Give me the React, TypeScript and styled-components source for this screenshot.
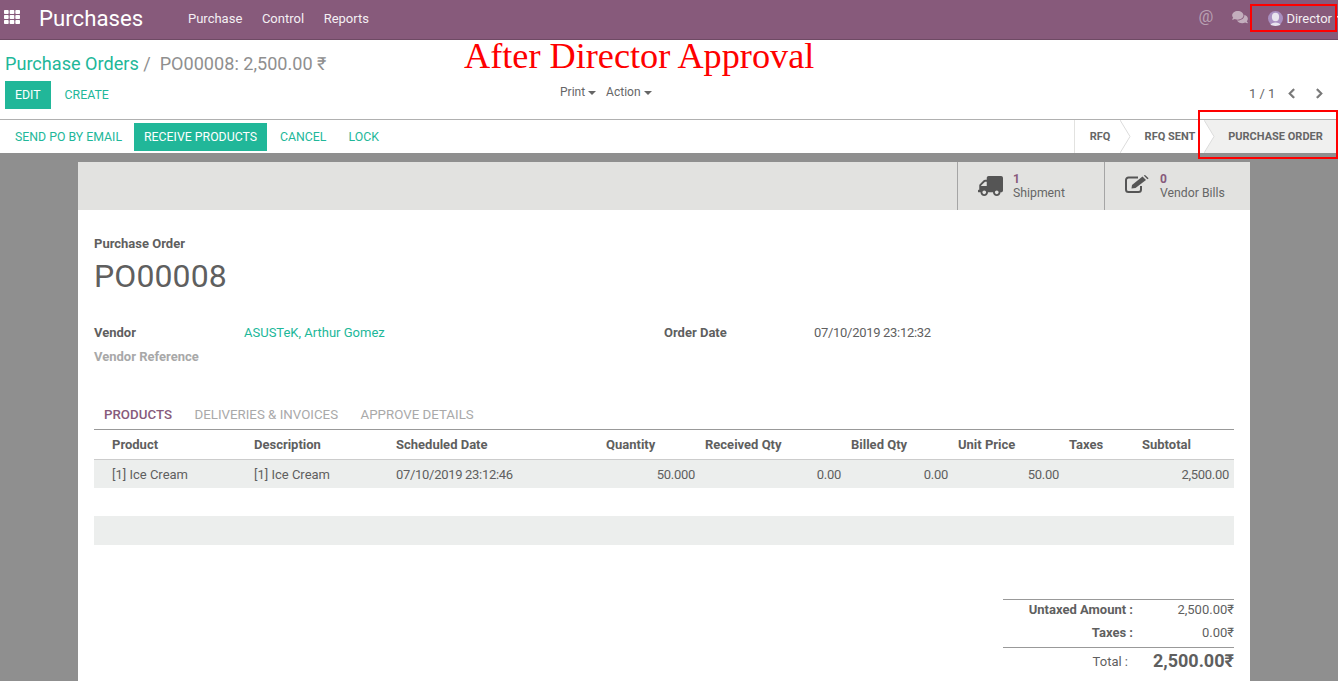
import React from "react";
import styled, { createGlobalStyle } from "styled-components";
import { FaTh, FaComments, FaTruck, FaChevronLeft, FaChevronRight } from "react-icons/fa";

const Global = createGlobalStyle`
  html, body { margin: 0; padding: 0; height: 681px; overflow: hidden; background: #fff; }
  body { font-family: Roboto, "Noto Sans", sans-serif; font-size: 13px; color: #5f5f5f; }
  * { box-sizing: border-box; }
`;

const Page = styled.div`
  position: relative;
  width: 1338px;
  height: 681px;
  overflow: hidden;
  display: flex;
  flex-direction: column;
`;

const Navbar = styled.header`
  height: 40px;
  flex: none;
  background: #875a7b;
  border-bottom: 1px solid #6e4a64;
  display: flex;
  align-items: center;
  color: #fff;
  padding: 0 0 3px 3px;
`;
const AppsIcon = styled(FaTh)`
  width: 18px;
  height: 16px;
  margin-top: -3px;
`;
const Brand = styled.div`
  font-size: 22.2px;
  margin-left: 18px;
  width: 149px;
`;
const NavLink = styled.a`
  margin-right: 19.6px;
  color: #f4eff3;
`;
const NavRight = styled.div`
  margin-left: auto;
  display: flex;
  align-items: center;
  color: #f4eff3;
`;
const AtSign = styled.span`
  font-size: 16.5px;
  color: #b9a1b3;
  margin-right: 19px;
  margin-top: -4px;
`;
const ChatIcon = styled(FaComments)`
  width: 16px;
  height: 14px;
  color: #c3aebd;
  margin-right: 20px;
  margin-top: -2px;
`;
const Avatar = styled.svg`
  width: 15px;
  height: 15px;
  margin-right: 3px;
  margin-top: 1px;
`;
const UserCaret = styled.i`
  display: inline-block;
  margin-left: 4px;
  margin-right: -6px;
  border-top: 4px solid #f4eff3;
  border-left: 4px solid transparent;
  border-right: 4px solid transparent;
`;

const ControlPanel = styled.section`
  height: 80px;
  flex: none;
  border-bottom: 1px solid #b0b0b0;
  padding: 0 5px;
  display: flex;
  flex-direction: column;
`;
const Breadcrumb = styled.div`
  font-size: 18.1px;
  line-height: 24px;
  margin-top: 12px;
  color: #8f8f8f;
  white-space: pre;
`;
const Crumb = styled.span`
  color: #21b799;
`;
const PanelRow = styled.div`
  display: grid;
  grid-template-columns: 555px 689px 1fr;
  margin-top: 5px;
  align-items: start;
`;
const Buttons = styled.div`
  display: flex;
  align-items: center;
`;
const StatusButtons = styled(Buttons)`
  gap: 2px;
`;
const Primary = styled.button`
  height: 28px;
  border: 0;
  margin: 0;
  background: #21b799;
  color: #fff;
  font: 12.3px Roboto, sans-serif;
  padding: 0 10px;
`;
const Link = styled.button<{ $left?: number; $right?: number }>`
  height: 28px;
  border: 0;
  margin: 0;
  background: transparent;
  color: #21b799;
  font: 12.3px Roboto, sans-serif;
  padding: 0 ${(p) => p.$right ?? 10}px 0 ${(p) => p.$left ?? 10}px;
`;
const Menus = styled.div`
  display: flex;
  gap: 10px;
  color: #666;
  font-size: 12px;
  line-height: 22px;
`;
const Caret = styled.i`
  display: inline-block;
  margin-left: 3px;
  vertical-align: middle;
  border-top: 4px solid #666;
  border-left: 4px solid transparent;
  border-right: 4px solid transparent;
`;
const Pager = styled.div`
  display: flex;
  align-items: center;
  height: 24px;
  color: #666;
  font-size: 13px;
`;
const PagerLeft = styled(FaChevronLeft)`
  width: 9px;
  height: 11px;
  margin-left: 12px;
  color: #777;
  stroke: currentColor;
  stroke-width: 30px;
`;
const PagerRight = styled(FaChevronRight)`
  width: 9px;
  height: 11px;
  margin-left: 19px;
  color: #777;
  stroke: currentColor;
  stroke-width: 30px;
`;

const StatusBar = styled.section`
  height: 33px;
  flex: none;
  background: #fff;
  display: flex;
  align-items: center;
  padding-left: 5px;
`;
const Steps = styled.div`
  margin-left: auto;
  display: flex;
  height: 100%;
  align-self: stretch;
  border-left: 1px solid #e2e2e0;
`;
const Step = styled.div<{ $w: number; $pad: number; $active?: boolean }>`
  position: relative;
  width: ${(p) => p.$w}px;
  display: flex;
  align-items: center;
  justify-content: center;
  font-size: 11px;
  font-weight: 700;
  color: #666;
  padding-left: ${(p) => p.$pad}px;
  background: ${(p) => (p.$active ? "#f0f0ef" : "#fff")};
`;
const Chevron = styled.svg`
  position: absolute;
  right: -10px;
  top: 0;
  width: 11px;
  height: 33px;
  z-index: 1;
`;

const Backdrop = styled.main`
  flex: 1;
  min-height: 0;
  background: #8f8f8f;
  padding: 9px 88px 0 78px;
`;
const Sheet = styled.article`
  background: #fff;
  height: 100%;
`;
const ButtonBox = styled.div`
  height: 48px;
  background: #e2e2e0;
  display: flex;
  justify-content: flex-end;
`;
const StatButton = styled.div<{ $w: number; $gap: number }>`
  width: ${(p) => p.$w}px;
  border-left: 1px solid #a5a5a5;
  display: flex;
  align-items: center;
  padding-left: 20px;
  gap: ${(p) => p.$gap}px;
  color: #666;
`;
const TruckIcon = styled(FaTruck)`
  width: 25px;
  height: 20px;
  color: #555;
  transform: scaleX(-1);
  margin-top: -1px;
`;
const EditIcon = styled.svg`
  width: 24px;
  height: 19px;
  margin-top: -3px;
`;
const StatText = styled.div`
  line-height: 14px;
  font-size: 12.25px;
  white-space: nowrap;
`;
const StatValue = styled.b`
  display: block;
  font-size: 12px;
  color: #875a7b;
`;

const Body = styled.div`
  padding: 26px 16px 0;
`;
const Eyebrow = styled.div`
  font-size: 13px;
  font-weight: 700;
  line-height: 16px;
`;
const Title = styled.h1`
  margin: 5px 0 0;
  font-size: 32px;
  line-height: 38px;
  font-weight: 400;
  letter-spacing: 0.1px;
`;
const Fields = styled.div`
  display: grid;
  grid-template-columns: 150px 420px 150px 1fr;
  margin-top: 30px;
  row-gap: 8px;
  line-height: 16px;
`;
const FieldLabel = styled.div<{ $muted?: boolean }>`
  font-weight: 700;
  color: ${(p) => (p.$muted ? "#a8a8a8" : "#5f5f5f")};
`;
const FieldValue = styled.div<{ $link?: boolean; $num?: boolean }>`
  color: ${(p) => (p.$link ? "#21b799" : "#5f5f5f")};
  ${(p) => (p.$num ? "letter-spacing: -0.3px;" : "")}
`;
const Tabs = styled.nav`
  margin-top: 34px;
  height: 31px;
  border-bottom: 1px solid #999;
  display: flex;
  padding-left: 10px;
  gap: 22.5px;
  line-height: 32px;
  font-size: 13.3px;
`;
const Tab = styled.span<{ $active?: boolean }>`
  color: ${(p) => (p.$active ? "#875a7b" : "#a9a9a9")};
  font-weight: ${(p) => (p.$active ? 500 : 400)};
`;
const Table = styled.table`
  table-layout: fixed;
  width: 1140px;
  border-collapse: collapse;
`;
const Head = styled.th<{ $first?: boolean }>`
  height: 29px;
  text-align: left;
  font-weight: 700;
  padding: 0 4px 0 ${(p) => (p.$first ? 18 : 4)}px;
  border-bottom: 1px solid #ccc;
  white-space: nowrap;
`;
const Cell = styled.td<{ $right?: number; $first?: boolean; $num?: boolean }>`
  height: 29px;
  background: #eceeed;
  text-align: ${(p) => (p.$right ? "right" : "left")};
  padding: 1px ${(p) => p.$right ?? 4}px 0 ${(p) => (p.$first ? 18 : 4)}px;
  white-space: nowrap;
  ${(p) => (p.$num ? "letter-spacing: -0.3px;" : "")}
`;
const EmptyBand = styled.div`
  height: 29px;
  background: #eceeed;
  margin-top: 28px;
`;
const Totals = styled.div`
  width: 231px;
  margin: 54px 0 0 auto;
  border-top: 1px solid #999;
`;
const TotalRow = styled.div<{ $h: number; $rule?: boolean }>`
  display: grid;
  grid-template-columns: 130px 1fr;
  height: ${(p) => p.$h}px;
  align-items: center;
  text-align: right;
  ${(p) => (p.$rule ? "border-top: 1px solid #999;" : "")}
`;
const TotalLabel = styled.b`
  font-weight: 700;
`;
const GrandLabel = styled.span`
  padding-right: 5px;
`;
const GrandValue = styled.b`
  font-size: 18px;
  margin-top: -2px;
`;

const Caption = styled.div`
  position: absolute;
  left: 464px;
  top: 35px;
  font-family: "Liberation Serif", serif;
  font-size: 36.25px;
  line-height: 42px;
  color: #fe0000;
  white-space: nowrap;
`;
const RedBox = styled.div<{ $l: number; $t: number; $w: number; $h: number }>`
  position: absolute;
  left: ${(p) => p.$l}px;
  top: ${(p) => p.$t}px;
  width: ${(p) => p.$w}px;
  height: ${(p) => p.$h}px;
  border: 2px solid #f00;
`;

const cols = [156, 142, 210, 99, 146, 107, 111, 73, 96];
const heads = ["Product", "Description", "Scheduled Date", "Quantity", "Received Qty", "Billed Qty", "Unit Price", "Taxes", "Subtotal"];

const StepArrow = () => (
  <Chevron viewBox="0 0 11 33">
    <path d="M0 0 L10 16.5 L0 33" fill="#fff" stroke="#dcdcdc" strokeWidth="1" />
  </Chevron>
);

export default function App() {
  return (
    <Page>
      <Global />
      <Navbar>
        <AppsIcon />
        <Brand>Purchases</Brand>
        <NavLink>Purchase</NavLink>
        <NavLink>Control</NavLink>
        <NavLink>Reports</NavLink>
        <NavRight>
          <AtSign>@</AtSign>
          <ChatIcon />
          <Avatar viewBox="0 0 15 15">
            <circle cx="7.5" cy="7.5" r="7.5" fill="#a98fc0" />
            <ellipse cx="7.5" cy="6" rx="3.6" ry="4.2" fill="#e8e4ee" />
            <path d="M2.5 14 C3 10.5 12 10.5 12.5 14 L7.5 15 Z" fill="#e8e4ee" />
          </Avatar>
          <span>Director</span>
          <UserCaret />
        </NavRight>
      </Navbar>
      <ControlPanel>
        <Breadcrumb>
          <Crumb>Purchase Orders</Crumb>{" /  "}PO00008: 2,500.00 ₹
        </Breadcrumb>
        <PanelRow>
          <Buttons>
            <Primary>EDIT</Primary>
            <Link $left={14}>CREATE</Link>
          </Buttons>
          <Menus>
            <span>Print<Caret /></span>
            <span>Action<Caret /></span>
          </Menus>
          <Pager>
            1 / 1
            <PagerLeft />
            <PagerRight />
          </Pager>
        </PanelRow>
      </ControlPanel>
      <StatusBar>
        <StatusButtons>
          <Link>SEND PO BY EMAIL</Link>
          <Primary>RECEIVE PRODUCTS</Primary>
          <Link $left={11} $right={9}>CANCEL</Link>
          <Link $left={11} $right={9}>LOCK</Link>
        </StatusButtons>
        <Steps>
          <Step $w={46} $pad={4}>RFQ<StepArrow /></Step>
          <Step $w={84} $pad={14}>RFQ SENT<StepArrow /></Step>
          <Step $w={133} $pad={8} $active>PURCHASE ORDER</Step>
        </Steps>
      </StatusBar>
      <Backdrop>
        <Sheet>
          <ButtonBox>
            <StatButton $w={147} $gap={10}>
              <TruckIcon />
              <StatText>
                <StatValue>1</StatValue>Shipment
              </StatText>
            </StatButton>
            <StatButton $w={146} $gap={11}>
              <EditIcon viewBox="0 0 24 19">
                <path d="M16 11v3.5a2.5 2.5 0 0 1-2.5 2.5H3.5A2.5 2.5 0 0 1 1 14.5V5a2.5 2.5 0 0 1 2.5-2.5H13" fill="none" stroke="#555" strokeWidth="2" />
                <path d="M6.5 13.5 L7 10 L17.5 1.5 L21 5 L10.5 13 Z" fill="#555" />
                <path d="M18.8 .6 L20 0 L23.6 3.2 L22.4 4.2 Z" fill="#555" />
              </EditIcon>
              <StatText>
                <StatValue>0</StatValue>Vendor Bills
              </StatText>
            </StatButton>
          </ButtonBox>
          <Body>
            <Eyebrow>Purchase Order</Eyebrow>
            <Title>PO00008</Title>
            <Fields>
              <FieldLabel>Vendor</FieldLabel>
              <FieldValue $link>ASUSTeK, Arthur Gomez</FieldValue>
              <FieldLabel>Order Date</FieldLabel>
              <FieldValue $num>07/10/2019 23:12:32</FieldValue>
              <FieldLabel $muted>Vendor Reference</FieldLabel>
            </Fields>
            <Tabs>
              <Tab $active>PRODUCTS</Tab>
              <Tab>DELIVERIES &amp; INVOICES</Tab>
              <Tab>APPROVE DETAILS</Tab>
            </Tabs>
            <Table>
              <colgroup>
                {cols.map((w, i) => (
                  <col key={i} width={w} />
                ))}
              </colgroup>
              <thead>
                <tr>
                  {heads.map((h, i) => (
                    <Head key={h} $first={i === 0}>{h}</Head>
                  ))}
                </tr>
              </thead>
              <tbody>
                <tr>
                  <Cell $first>[1] Ice Cream</Cell>
                  <Cell>[1] Ice Cream</Cell>
                  <Cell $num>07/10/2019 23:12:46</Cell>
                  <Cell $right={6} $num>50.000</Cell>
                  <Cell $right={6} $num>0.00</Cell>
                  <Cell $right={6} $num>0.00</Cell>
                  <Cell $right={6} $num>50.00</Cell>
                  <Cell />
                  <Cell $right={5} $num>2,500.00</Cell>
                </tr>
              </tbody>
            </Table>
            <EmptyBand />
            <Totals>
              <TotalRow $h={18}>
                <TotalLabel>Untaxed Amount :</TotalLabel>
                <span>2,500.00₹</span>
              </TotalRow>
              <TotalRow $h={29}>
                <TotalLabel>Taxes :</TotalLabel>
                <span>0.00₹</span>
              </TotalRow>
              <TotalRow $h={28} $rule>
                <GrandLabel>Total :</GrandLabel>
                <GrandValue>2,500.00₹</GrandValue>
              </TotalRow>
            </Totals>
          </Body>
        </Sheet>
      </Backdrop>
      <Caption>After Director Approval</Caption>
      <RedBox $l={1250} $t={4} $w={87} $h={28} />
      <RedBox $l={1198} $t={110} $w={140} $h={49} />
    </Page>
  );
}
